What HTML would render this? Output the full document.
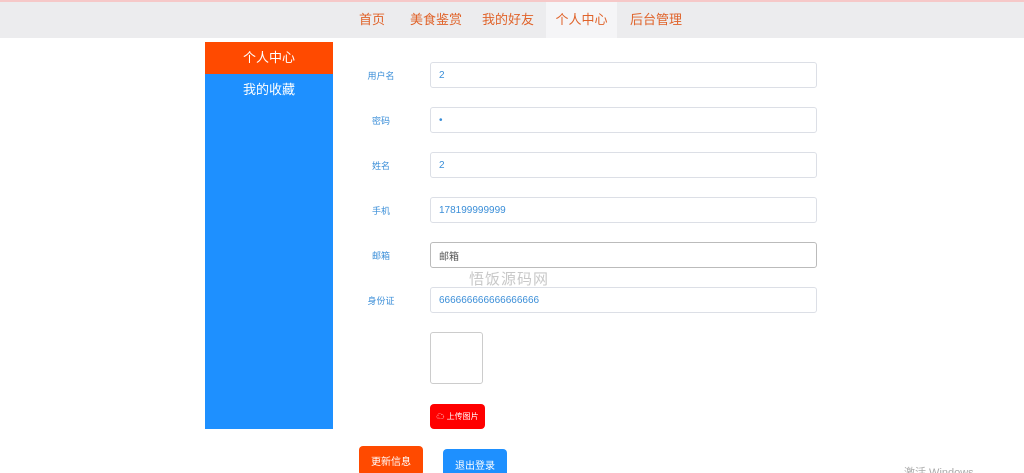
<!DOCTYPE html>
<html><head><meta charset="utf-8"><style>
*{margin:0;padding:0;box-sizing:border-box}
html,body{width:1024px;height:473px;overflow:hidden}
body{background:#fff;font-family:"Liberation Sans","Noto Sans CJK SC",sans-serif;position:relative}
.nav{position:absolute;left:0;top:0;width:1024px;height:38px;background:#ececee;border-top:2px solid #f6c8c8}
.nav a{position:absolute;top:0;height:36px;line-height:36px;color:#e0632a;font-size:13px;text-align:center}
.side{position:absolute;left:205px;top:42px;width:128px;height:387px;background:#1e90ff}
.side div{height:32px;line-height:32px;text-align:center;color:#fff;font-size:13px}
.lbl{position:absolute;left:355px;width:52px;text-align:center;font-size:9px;color:#3a8ed8}
.inp{position:absolute;left:430px;width:387px;height:26px;border:1px solid #dcdfe6;border-radius:3px;font-size:10px;color:#3a8ed8;padding-left:8px;display:flex;align-items:center}
.btn{position:absolute;color:#fff;font-size:10px;border-radius:4px;display:flex;align-items:center;justify-content:center}
</style></head><body>
<div class="nav">
<a style="left:352px;width:40px">首页</a>
<a style="left:405px;width:62px">美食鉴赏</a>
<a style="left:477px;width:62px">我的好友</a>
<a style="left:546px;width:71px;background:#f5f5f7">个人中心</a>
<a style="left:625px;width:62px">后台管理</a>
</div>
<div class="side"><div style="background:#ff4a00">个人中心</div><div>我的收藏</div></div>
<div class="lbl" style="top:69px">用户名</div><div class="inp" style="top:62px">2</div>
<div class="lbl" style="top:114px">密码</div><div class="inp" style="top:107px">•</div>
<div class="lbl" style="top:159px">姓名</div><div class="inp" style="top:152px">2</div>
<div class="lbl" style="top:204px">手机</div><div class="inp" style="top:197px">178199999999</div>
<div class="lbl" style="top:249px">邮箱</div><div class="inp" style="top:242px;color:#555;border-color:#bbb">邮箱</div>
<div class="lbl" style="top:294px">身份证</div><div class="inp" style="top:287px">666666666666666666</div>
<div style="position:absolute;left:469px;top:268px;font-size:15px;color:#c8c8c8;letter-spacing:1px">悟饭源码网</div>
<div style="position:absolute;left:430px;top:332px;width:53px;height:52px;border:1px solid #ccc;border-radius:3px"></div>
<div class="btn" style="left:430px;top:404px;width:55px;height:25px;background:#f00;font-size:8px">☁ 上传图片</div>
<div class="btn" style="left:359px;top:446px;width:64px;height:30px;background:#ff4a00;padding-bottom:2px">更新信息</div>
<div class="btn" style="left:443px;top:449px;width:64px;height:30px;background:#1e90ff">退出登录</div>
<div style="position:absolute;left:904px;top:464px;font-size:11px;color:#aaa">激活 Windows</div>
</body></html>
